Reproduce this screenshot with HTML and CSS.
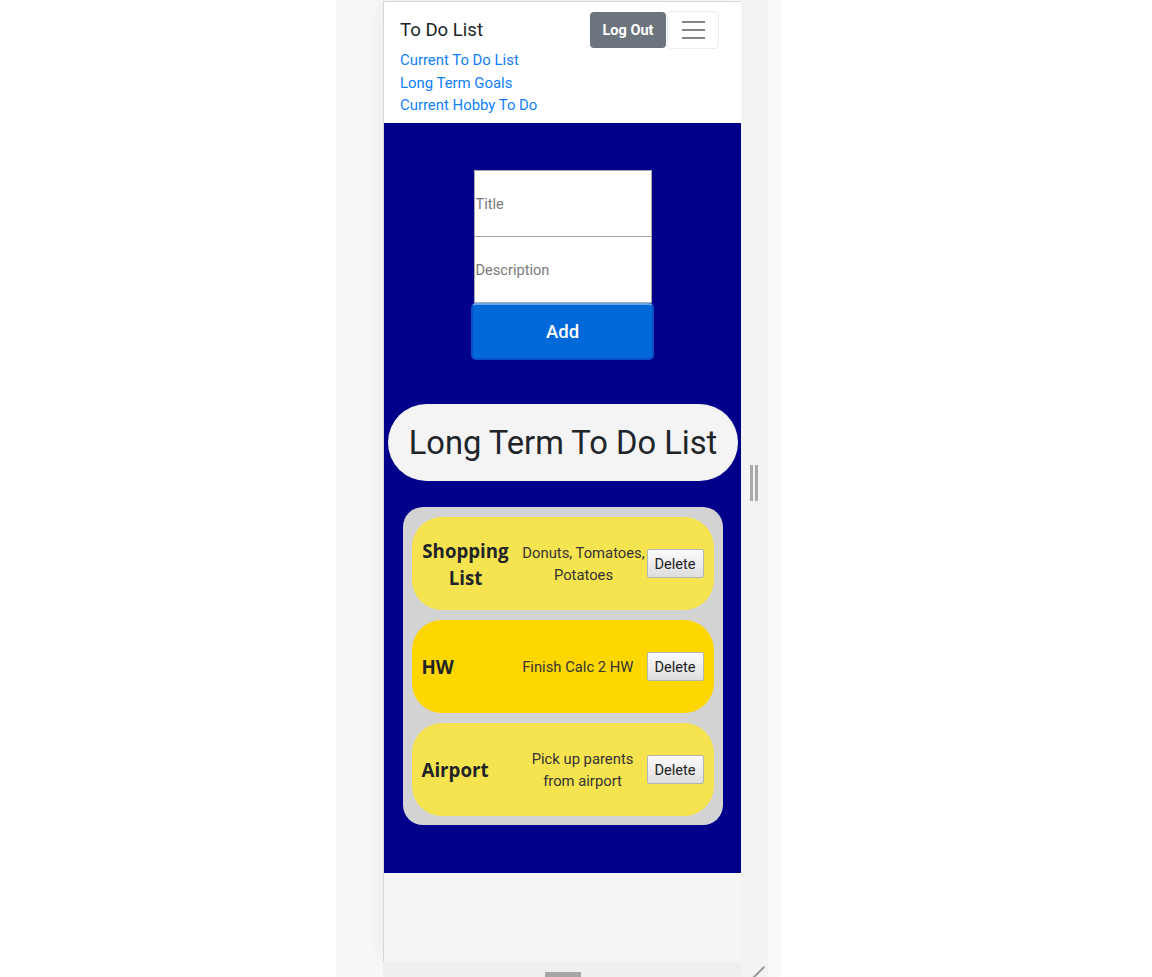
FILE: index.html
```html
<!DOCTYPE html>
<html lang="en">
<head>
<meta charset="utf-8">
<title>To Do List</title>
<link rel="stylesheet" href="styles.css">
</head>
<body>
<div class="stage">
  <div class="device-col">
    <div class="screen">
      <nav class="navbar">
        <div class="nav-top">
          <span class="brand">To Do List</span>
          <div class="nav-actions">
            <button class="btn-logout">Log Out</button>
            <button class="btn-toggler" aria-label="menu">
              <span class="bar"></span><span class="bar"></span><span class="bar"></span>
            </button>
          </div>
        </div>
        <div class="nav-links">
          <a href="#" class="nav-link">Current To Do List</a>
          <a href="#" class="nav-link">Long Term Goals</a>
          <a href="#" class="nav-link">Current Hobby To Do</a>
        </div>
      </nav>
      <main class="main">
        <form class="add-form">
          <input class="field" type="text" placeholder="Title">
          <input class="field" type="text" placeholder="Description">
          <button type="button" class="btn-add">Add</button>
        </form>
        <h1 class="list-heading">Long Term To Do List</h1>
        <div class="list">
          <div class="item light">
            <h3 class="item-title wrap">Shopping List</h3>
            <p class="item-desc wide">Donuts, Tomatoes, Potatoes</p>
            <button class="btn-delete">Delete</button>
          </div>
          <div class="item gold">
            <h3 class="item-title">HW</h3>
            <p class="item-desc">Finish Calc 2 HW</p>
            <button class="btn-delete">Delete</button>
          </div>
          <div class="item light">
            <h3 class="item-title">Airport</h3>
            <p class="item-desc narrow">Pick up parents from airport</p>
            <button class="btn-delete">Delete</button>
          </div>
        </div>
      </main>
      <div class="page-rest"></div>
    </div>
    <div class="bottom-bar"><span class="handle-h"></span></div>
  </div>
  <div class="right-bar">
    <span class="handle-v"></span>
    <span class="corner"></span>
  </div>
</div>
</body>
</html>
```
FILE: styles.css
```css
* { box-sizing: border-box; }
html, body { margin: 0; padding: 0; background: #ffffff; }
body { font-family: Roboto, "Liberation Sans", sans-serif; }

.stage {
  margin-left: 336px;
  width: 445px;
  height: 977px;
  background: linear-gradient(to right, #f7f7f7, #fafafa);
  display: flex;
  overflow: hidden;
}

.device-col {
  margin-left: 47px;
  width: 358px;
  display: flex;
  flex-direction: column;
}

.screen {
  margin-top: 1px;
  height: 961px;
  border-top: 1px solid #d6d6d6;
  border-left: 1px solid #d6d6d6;
  background: #f5f5f5;
  display: flex;
  flex-direction: column;
  box-shadow: 0 0 18px rgba(0,0,0,0.06);
  overflow: hidden;
}

.bottom-bar {
  flex: 1;
  background: #efefef;
  display: flex;
  justify-content: center;
  align-items: flex-end;
}
.handle-h {
  width: 36px;
  height: 5px;
  background: #a6a6a6;
  margin-left: 1px;
}

.right-bar {
  width: 27px;
  background: #f3f3f3;
  display: flex;
  flex-direction: column;
  align-items: center;
  justify-content: center;
}
.handle-v {
  margin-bottom: 12px;
  margin-right: 1px;
  width: 8px;
  height: 36px;
  border-left: 3px solid #aaaaaa;
  border-right: 3px solid #aaaaaa;
}
.corner {
  position: absolute;
  top: 966px;
  left: 753px;
  width: 16px;
  height: 2px;
  background: #9a9a9a;
  transform: rotate(-45deg);
  transform-origin: left center;
  margin-top: 11px;
}

/* navbar */
.navbar {
  background: #ffffff;
  padding: 9px 22px 6.5px 16px;
}
.nav-top {
  display: flex;
  justify-content: space-between;
  align-items: center;
  height: 38px;
}
.brand {
  font-size: 18.6px;
  color: #212529;
}
.nav-actions {
  display: flex;
  align-items: center;
}
.btn-logout {
  width: 76px;
  height: 36px;
  border: none;
  border-radius: 4px;
  background: #6c757d;
  color: #ffffff;
  font-family: Roboto, sans-serif;
  font-weight: 700;
  font-size: 14.5px;
  padding: 0;
}
.btn-toggler {
  margin-left: 1px;
  width: 52px;
  height: 38px;
  border: 1px solid #ececec;
  border-radius: 4px;
  background: #ffffff;
  display: flex;
  flex-direction: column;
  align-items: center;
  justify-content: center;
  gap: 6px;
  padding: 0;
}
.bar {
  display: block;
  width: 23px;
  height: 2px;
  background: #858585;
}
.nav-links {
  display: flex;
  flex-direction: column;
  align-items: flex-start;
}
.nav-link {
  color: #0f7ffa;
  text-decoration: none;
  font-size: 14.9px;
  line-height: 22.5px;
}

/* main */
.main {
  background: #00008b;
  padding: 47px 0 48px;
  display: flex;
  flex-direction: column;
  align-items: center;
}
.add-form {
  display: flex;
  flex-direction: column;
  align-items: center;
}
.field {
  width: 178px;
  height: 67px;
  border: 1px solid #a9a9a9;
  background: #ffffff;
  font-family: Roboto, sans-serif;
  font-size: 14.6px;
  padding: 0 1px;
  margin: 0;
  outline: none;
}
.field + .field { margin-top: -1px; }
.field::placeholder { color: #7a7a7a; }
.btn-add {
  margin-top: 0;
  width: 183px;
  height: 57px;
  border: 2px solid #0b50c9;
  border-top-color: #6ca6ee;
  border-radius: 5px;
  background: #0068d9;
  color: #ffffff;
  font-family: Roboto, sans-serif;
  font-size: 18.5px;
  font-weight: 500;
}

.list-heading {
  margin: 44px 3px 0 4px;
  align-self: stretch;
  height: 77px;
  border-radius: 39px;
  background: #f4f4f4;
  color: #212529;
  font-size: 32.7px;
  font-weight: 400;
  display: flex;
  align-items: center;
  justify-content: center;
}

.list {
  margin-top: 26px;
  width: 320px;
  background: #d3d3d3;
  border-radius: 20px;
  padding: 10px 9px 9px;
  display: flex;
  flex-direction: column;
  gap: 10px;
}
.item {
  height: 93px;
  border-radius: 30px;
  display: flex;
  align-items: center;
  padding: 0 10px;
}
.item.light { background: #f6e350; }
.item.gold { background: #ffd700; }
.item-title {
  margin: 0;
  font-family: "Open Sans", sans-serif;
  font-weight: 700;
  font-size: 18.7px;
  line-height: 27px;
  color: #212529;
  text-align: center;
  flex: 0 1 auto;
}
.item-title.wrap { max-width: 88px; }
.item-desc {
  margin: 0 13px 0 auto;
  font-family: Roboto, sans-serif;
  font-size: 14.8px;
  line-height: 22px;
  color: #333333;
  text-align: center;
  flex: 0 1 auto;
  max-width: 113px;
}
.item-desc.wide { max-width: 126px; margin-right: 0; }
.item-desc.narrow { max-width: 104px; margin-right: 12px; }
.btn-delete {
  flex: none;
  width: 57px;
  height: 29px;
  border: 1px solid #b5b5b5;
  border-radius: 2px;
  background: linear-gradient(#fbfbfb, #dedede);
  color: #222222;
  font-family: Roboto, sans-serif;
  font-size: 14.6px;
  padding: 0;
}

.page-rest { flex: 1; background: #f5f5f5; }
```
